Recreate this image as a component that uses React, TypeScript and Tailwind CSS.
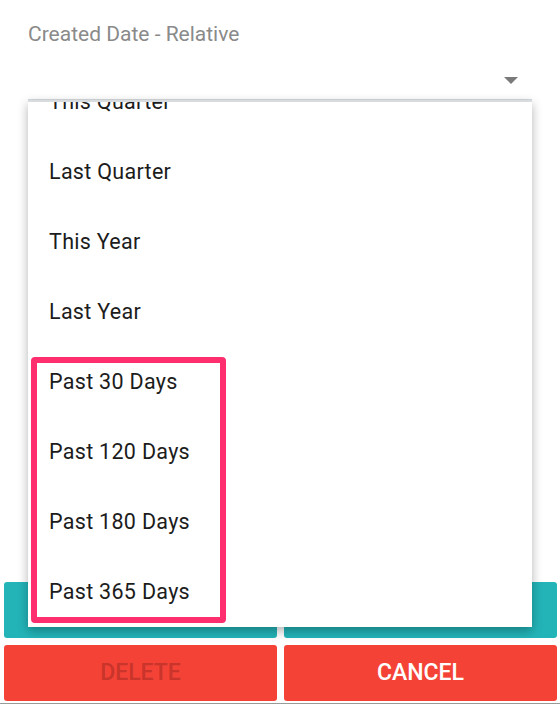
import React from 'react';

const options = [
  'This Quarter',
  'Last Quarter',
  'This Year',
  'Last Year',
  'Past 30 Days',
  'Past 120 Days',
  'Past 180 Days',
  'Past 365 Days',
];

const App: React.FC = () => {
  return (
    <div
      className="relative w-[560px] h-[705px] bg-white overflow-hidden flex flex-col"
      style={{ fontFamily: 'Roboto, "Noto Sans", sans-serif' }}
    >
      {/* Field label */}
      <div className="pt-[22px] pl-[28px] text-[21px] leading-[24px] text-[#8a8a8a]">
        Created Date - Relative
      </div>

      {/* Select row */}
      <div className="mx-[28px] mt-[20px] h-[34px] flex items-start justify-end border-b border-[#d6d9dc]">
        <div className="mt-[11px] mr-[14px] w-0 h-0 border-l-[7px] border-r-[7px] border-t-[7px] border-l-transparent border-r-transparent border-t-[#7a7a7a]" />
      </div>

      {/* Buttons */}
      <div className="mt-auto grid grid-cols-2 gap-x-[7px] gap-y-[7px] pl-[4px] pr-[3px]">
        <button className="h-[56px] rounded-[3px] bg-[#23b4b8]" />
        <button className="h-[56px] rounded-[3px] bg-[#23b4b8]" />
        <button className="h-[56px] rounded-[3px] bg-[#f44336] text-[23px] font-medium text-[#c9342b]">
          DELETE
        </button>
        <button className="h-[56px] rounded-[3px] bg-[#f44336] text-[23px] font-medium text-white">
          CANCEL
        </button>
      </div>
      <div className="mt-[2px] mb-[1px] h-px bg-[#9a9a9a]" />

      {/* Dropdown menu */}
      <div className="absolute left-[28px] top-[100px] w-[504px] h-[527px] bg-white overflow-hidden border-t-2 border-[#d9dcdf] shadow-[0_4px_10px_rgba(0,0,0,0.3)]">
        <div className="-mt-[35px]">
          {options.map((opt) => (
            <div
              key={opt}
              className="h-[70px] flex items-center pl-[21px] text-[21.5px] tracking-[0.3px] text-[#1c1c1c]"
            >
              {opt}
            </div>
          ))}
        </div>
      </div>

      {/* Highlight annotation */}
      <div className="absolute left-[31px] top-[357px] w-[195px] h-[266px] border-[6px] border-[#ff2e6e] rounded-[4px]" />
    </div>
  );
};

export default App;
